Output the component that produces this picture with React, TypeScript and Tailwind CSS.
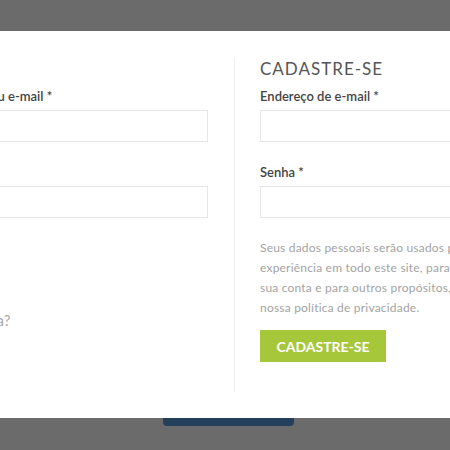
import React from "react";

const font = { fontFamily: "Lato, 'Open Sans', sans-serif" };

function Field({ label }: { label: string }) {
  return (
    <div className="flex flex-col">
      <label className="text-[13px] font-semibold leading-[20px] text-[#444]">{label}</label>
      <input className="mt-[4px] h-[32px] w-full border border-[#e6e6e6] bg-white outline-none" />
    </div>
  );
}

export default function App() {
  return (
    <div className="relative h-[450px] w-[450px] overflow-hidden bg-[#6b6b6b]" style={font}>
      {/* page behind the overlay */}
      <div className="pl-[163px] pt-[380px]">
        <div className="h-[46px] w-[131px] rounded-[4px] bg-[#243f5c]" />
      </div>

      {/* modal */}
      <div className="absolute left-[-141px] top-[31px] flex h-[387px] w-[761px] bg-white px-[30px] py-[26px]">
        <div className="flex w-[345px] flex-col pr-[26px]">
          <h2 className="text-[17px] leading-[24px] tracking-[1px] text-[#555]">ACESSAR</h2>
          <div className="mt-[5px] flex flex-col gap-[20px]">
            <Field label="Nome de usuário ou e-mail *" />
            <Field label="Senha *" />
          </div>
          <div className="mt-[20px] flex items-center">
            <button className="h-[32px] bg-[#a6c73a] px-3 text-[14px] font-bold text-white">ACESSAR</button>
          </div>
          <a className="mt-[40px] text-[15px] leading-[20px] text-[#aaa]">Perdeu sua senha?</a>
        </div>

        <div className="flex flex-1 flex-col border-l border-[#eeeeee] pl-[25px]">
          <h2 className="text-[17px] leading-[24px] tracking-[1px] text-[#555]">CADASTRE-SE</h2>
          <div className="mt-[5px] flex flex-col gap-[20px]">
            <Field label="Endereço de e-mail *" />
            <Field label="Senha *" />
          </div>
          <p className="mt-[20px] whitespace-nowrap text-[12px] leading-[20px] tracking-[0.2px] text-[#a3a3a3]">
            Seus dados pessoais serão usados para aprimorar a sua
            <br />
            experiência em todo este site, para gerenciar o acesso a
            <br />
            sua conta e para outros propósitos, como descritos em
            <br />
            nossa política de privacidade.
          </p>
          <button className="mt-[12px] h-[32px] w-[126px] bg-[#a6c73a] text-[14px] font-bold text-white">
            CADASTRE-SE
          </button>
        </div>
      </div>
    </div>
  );
}
